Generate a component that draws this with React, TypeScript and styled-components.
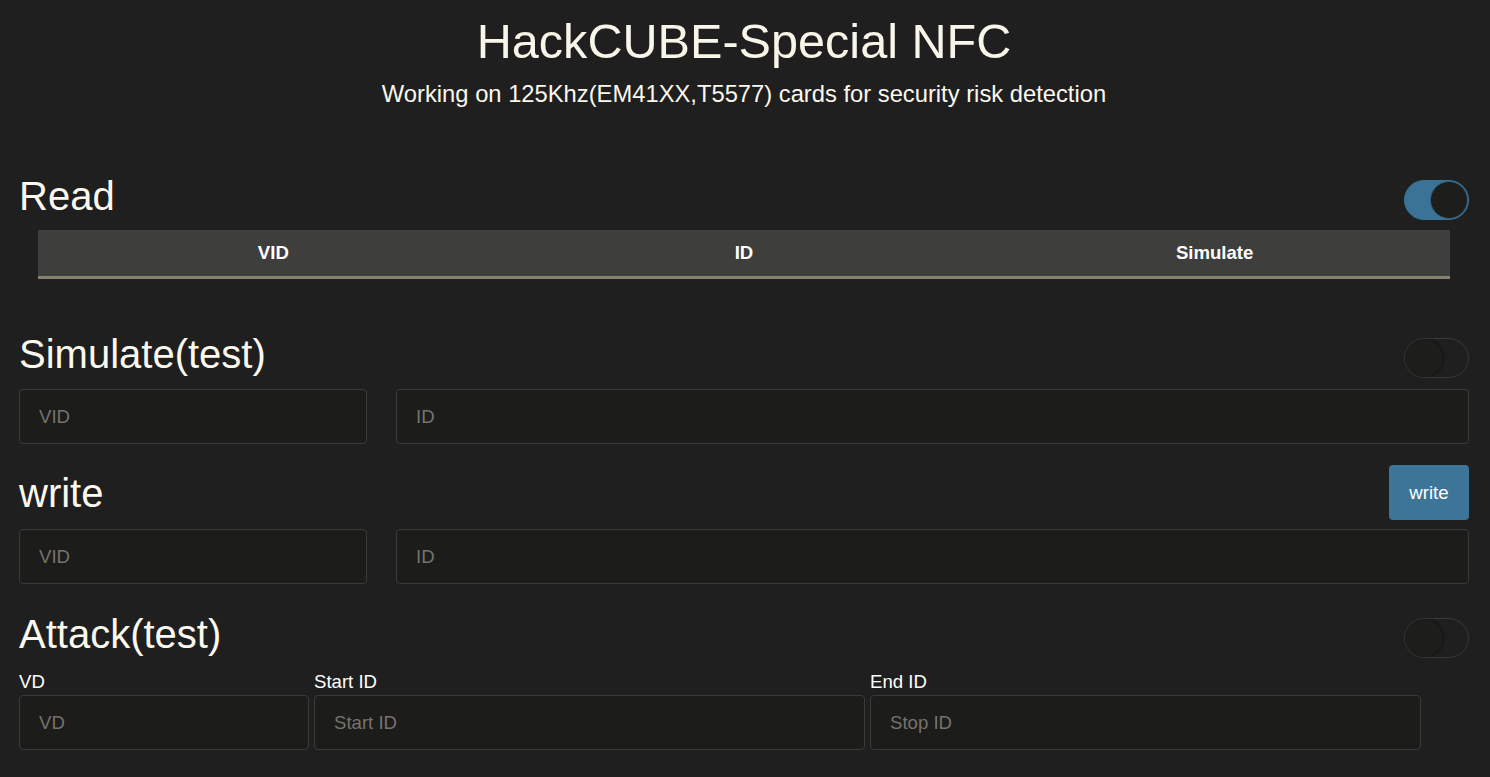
import React, { useState } from "react";
import styled, { createGlobalStyle } from "styled-components";

const GlobalStyle = createGlobalStyle`
  html, body {
    margin: 0;
    padding: 0;
    background: #1f1f1f;
  }
  body {
    font-family: "Liberation Sans", Arial, sans-serif;
    color: #fbf8ee;
    min-height: 100vh;
  }
  * { box-sizing: border-box; }
`;

const Page = styled.div`
  padding: 12px 21px 20px 19px;
`;

const Title = styled.h1`
  margin: 0;
  text-align: center;
  font-size: 48.6px;
  line-height: 1.2;
  font-weight: 400;
  color: #f8f5e9;
`;

const Subtitle = styled.p`
  margin: 9.6px 0 0;
  text-align: center;
  font-size: 23.75px;
  line-height: 1.2;
  color: #fbf8ee;
`;

const Section = styled.section<{ $top: number }>`
  margin-top: ${(p) => p.$top}px;
`;

const HeaderRow = styled.div`
  display: flex;
  justify-content: space-between;
  align-items: flex-start;
`;

const Heading = styled.h2`
  margin: 0;
  font-size: 40px;
  line-height: 48px;
  font-weight: 400;
  color: #fbf8ee;
`;

const Track = styled.button<{ $on: boolean }>`
  position: relative;
  margin-top: 8px;
  width: 65px;
  height: 40px;
  padding: 0;
  border-radius: 20px;
  border: 1px solid ${(p) => (p.$on ? "#3b7397" : "#393938")};
  background: ${(p) => (p.$on ? "#3b7397" : "#1f1f1f")};
  cursor: pointer;
`;

const Knob = styled.span<{ $on: boolean }>`
  position: absolute;
  top: 0;
  left: ${(p) => (p.$on ? "25px" : "0")};
  width: 38px;
  height: 38px;
  border-radius: 50%;
  background: #1d1d1c;
  border: 1px solid ${(p) => (p.$on ? "#2f5f7d" : "#1d1d1c")};
  box-shadow: ${(p) => (p.$on ? "none" : "1px 0 2px rgba(0,0,0,0.45)")};
`;

const Toggle = ({ on, onClick }: { on: boolean; onClick: () => void }) => (
  <Track $on={on} onClick={onClick} role="switch" aria-checked={on}>
    <Knob $on={on} />
  </Track>
);

const Table = styled.table`
  margin: 10px 19px 0;
  width: calc(100% - 38px);
  border-collapse: collapse;
  table-layout: fixed;
`;

const Th = styled.th`
  background: #3e3e3c;
  height: 47px;
  padding: 0;
  border-bottom: 3px solid #878070;
  font-size: 18.6px;
  font-weight: 700;
  color: #ffffff;
  text-align: center;
`;

const PairGrid = styled.div`
  display: grid;
  grid-template-columns: 348px 1fr;
  column-gap: 29px;
  margin-top: 11.4px;
`;

const Input = styled.input`
  width: 100%;
  height: 55px;
  padding: 0 19px;
  background: #1c1c1b;
  border: 1px solid #3b3b3a;
  border-radius: 4px;
  color: #f1eee4;
  font-family: "Liberation Sans", Arial, sans-serif;
  font-size: 18.6px;
  outline: none;
  &::placeholder {
    color: #77736b;
  }
`;

const WriteButton = styled.button`
  margin-top: -3.6px;
  width: 80px;
  height: 55px;
  border: none;
  border-radius: 4px;
  background: #3c7597;
  color: #ffffff;
  font-family: "Liberation Sans", Arial, sans-serif;
  font-size: 18.6px;
  cursor: pointer;
`;

const WriteGrid = styled(PairGrid)`
  margin-top: 9px;
`;

const AttackGrid = styled.div`
  display: grid;
  grid-template-columns: 290px 551px 551px;
  column-gap: 5px;
  margin-top: 13px;
`;

const Field = styled.div`
  display: flex;
  flex-direction: column;
  gap: 2.3px;
`;

const Label = styled.label`
  font-size: 18.6px;
  line-height: 1.2;
  color: #ffffff;
`;

export default function App() {
  const [read, setRead] = useState(true);
  const [sim, setSim] = useState(false);
  const [attack, setAttack] = useState(false);

  return (
    <>
      <GlobalStyle />
      <Page>
        <Title>HackCUBE-Special NFC</Title>
        <Subtitle>Working on 125Khz(EM41XX,T5577) cards for security risk detection</Subtitle>

        <Section $top={63.6}>
          <HeaderRow>
            <Heading>Read</Heading>
            <Toggle on={read} onClick={() => setRead(!read)} />
          </HeaderRow>
          <Table>
            <thead>
              <tr>
                <Th>VID</Th>
                <Th>ID</Th>
                <Th>Simulate</Th>
              </tr>
            </thead>
          </Table>
        </Section>

        <Section $top={51.6}>
          <HeaderRow>
            <Heading>Simulate(test)</Heading>
            <Toggle on={sim} onClick={() => setSim(!sim)} />
          </HeaderRow>
          <PairGrid>
            <Input placeholder="VID" />
            <Input placeholder="ID" />
          </PairGrid>
        </Section>

        <Section $top={24.6}>
          <HeaderRow>
            <Heading>write</Heading>
            <WriteButton>write</WriteButton>
          </HeaderRow>
          <WriteGrid>
            <Input placeholder="VID" />
            <Input placeholder="ID" />
          </WriteGrid>
        </Section>

        <Section $top={25.1}>
          <HeaderRow>
            <Heading>Attack(test)</Heading>
            <Toggle on={attack} onClick={() => setAttack(!attack)} />
          </HeaderRow>
          <AttackGrid>
            <Field>
              <Label>VD</Label>
              <Input placeholder="VD" />
            </Field>
            <Field>
              <Label>Start ID</Label>
              <Input placeholder="Start ID" />
            </Field>
            <Field>
              <Label>End ID</Label>
              <Input placeholder="Stop ID" />
            </Field>
          </AttackGrid>
        </Section>
      </Page>
    </>
  );
}
